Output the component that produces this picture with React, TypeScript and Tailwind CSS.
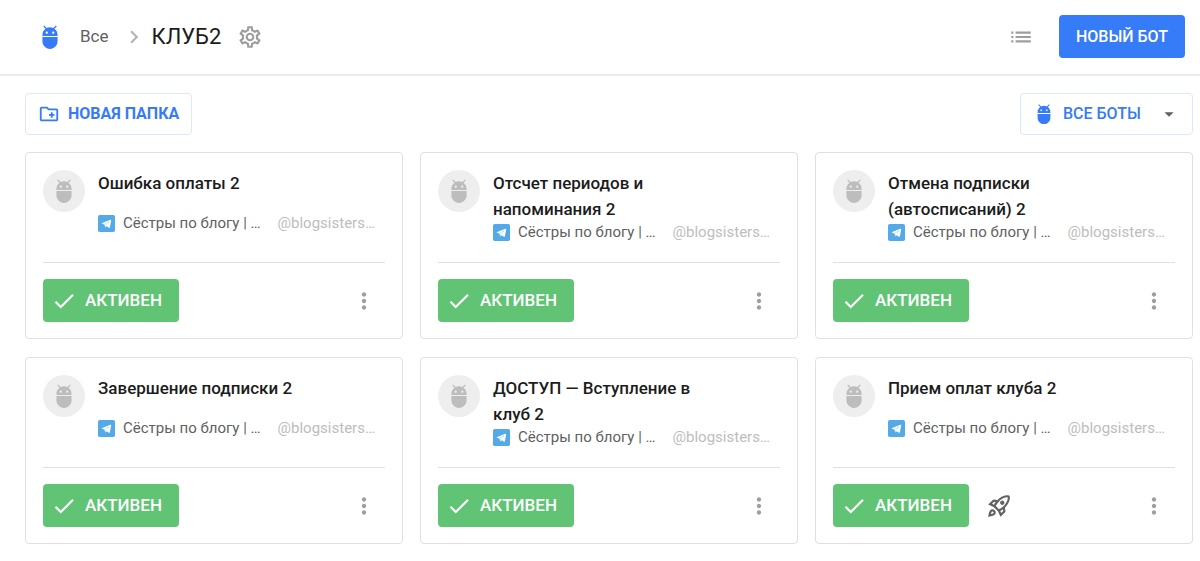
import {
  MdAdb,
  MdArrowDropDown,
  MdCheck,
  MdChevronRight,
  MdList,
  MdMoreVert,
  MdOutlineCreateNewFolder,
  MdOutlineRocketLaunch,
  MdOutlineSettings,
} from "react-icons/md";

interface Bot {
  title: string;
  launchable?: boolean;
}

const bots: Bot[] = [
  { title: "Ошибка оплаты 2" },
  { title: "Отсчет периодов и напоминания 2" },
  { title: "Отмена подписки (автосписаний) 2" },
  { title: "Завершение подписки 2" },
  { title: "ДОСТУП — Вступление в клуб 2" },
  { title: "Прием оплат клуба 2", launchable: true },
];

function TelegramBadge() {
  return (
    <svg viewBox="0 0 24 24" className="size-[17px] shrink-0" aria-hidden="true">
      <rect width="24" height="24" rx="2.5" fill="#54a9e9" />
      <path
        d="M17.3 6.6 6 11.2c-.9.4-.9.9-.1 1.2l2.9.9 6.6-4.1c.3-.2.6 0 .4.2l-5.2 4.9v3.2l1.9-1.7 2.9 2.1c.7.4 1.2.2 1.4-.6l1.8-9.7c.1-.8-.5-1.2-1.3-.8z"
        fill="#fff"
      />
      <path d="M8.8 13.3l6.8-4.2-5 5.2v3.2z" fill="#fff" />
    </svg>
  );
}

function Header() {
  return (
    <header className="flex items-center justify-between border-b-2 border-[#ebebeb] pt-[15px] pr-[15px] pb-4 pl-[37px]">
      <nav className="flex items-center">
        <MdAdb size={26} className="text-[#367bf7]" />
        <a href="#all" className="ml-[17px] text-[17px] text-[#616161]">
          Все
        </a>
        <MdChevronRight size={26} className="ml-3 text-[#b5b5b5]" />
        <h1 className="ml-[5px] text-[22px] text-[#1c1c1c]">КЛУБ2</h1>
        <button type="button" aria-label="Настройки" className="ml-4 text-[#9e9e9e]">
          <MdOutlineSettings size={26} />
        </button>
      </nav>
      <div className="flex items-center gap-[25px]">
        <button type="button" aria-label="Список" className="text-[#9e9e9e]">
          <MdList size={26} />
        </button>
        <button type="button" className="h-[43px] rounded bg-[#367bf7] px-[17px] text-base font-medium text-white">
          НОВЫЙ БОТ
        </button>
      </div>
    </header>
  );
}

function Toolbar() {
  return (
    <div className="flex items-center justify-between">
      <button
        type="button"
        className="flex h-[42px] items-center gap-2 rounded border border-[#dbe8fd] px-3 text-base font-bold text-[#367bf7]"
      >
        <MdOutlineCreateNewFolder size={22} />
        НОВАЯ ПАПКА
      </button>
      <label className="flex h-[42px] items-center rounded border border-[#dbe8fd] px-3 text-[#367bf7]">
        <MdAdb size={22} />
        <select aria-label="Фильтр ботов" className="ml-2 w-[95px] appearance-none text-base font-medium outline-none">
          <option>ВСЕ БОТЫ</option>
        </select>
        <MdArrowDropDown size={22} className="text-[#616161]" />
      </label>
    </div>
  );
}

function BotCard({ title, launchable }: Bot) {
  return (
    <article className="rounded border border-[#e0e0e0] px-[17px] pt-[17px] pb-4">
      <div className="flex min-h-[92px] gap-[13px]">
        <div className="flex size-[42px] shrink-0 items-center justify-center rounded-full bg-[#eeeeee] text-[#bdbdbd]">
          <MdAdb size={26} />
        </div>
        <div className="min-w-0 flex-1">
          <h2 className="min-h-[43px] max-w-[220px] text-[17px] leading-[26px] font-medium text-[#1c1c1c]">{title}</h2>
          <div className="flex h-5 items-center text-[15px] whitespace-nowrap">
            <TelegramBadge />
            <span className="ml-2 text-[#616161]">Сёстры по блогу | …</span>
            <span className="ml-[17px] text-[#bdbdbd]">@blogsisters…</span>
          </div>
        </div>
      </div>
      <div className="flex items-center border-t border-[#e0e0e0] pt-4">
        <button
          type="button"
          className="flex h-[43px] items-center gap-2 rounded bg-[#60c474] pr-[17px] pl-2 text-[17px] font-medium text-white"
        >
          <MdCheck size={26} />
          АКТИВЕН
        </button>
        {launchable && (
          <button type="button" aria-label="Запустить" className="ml-[17px] text-[#616161]">
            <MdOutlineRocketLaunch size={26} />
          </button>
        )}
        <button type="button" aria-label="Меню" className="ml-auto px-2 text-[#9e9e9e]">
          <MdMoreVert size={26} />
        </button>
      </div>
    </article>
  );
}

export default function App() {
  return (
    <div className="min-h-screen bg-white font-[Roboto,sans-serif]">
      <Header />
      <main className="flex flex-col gap-[17px] pt-[17px] pr-[7px] pb-[17px] pl-[25px]">
        <Toolbar />
        <section className="grid grid-cols-3 gap-x-[17px] gap-y-[18px]">
          {bots.map((bot) => (
            <BotCard key={bot.title} {...bot} />
          ))}
        </section>
      </main>
    </div>
  );
}
